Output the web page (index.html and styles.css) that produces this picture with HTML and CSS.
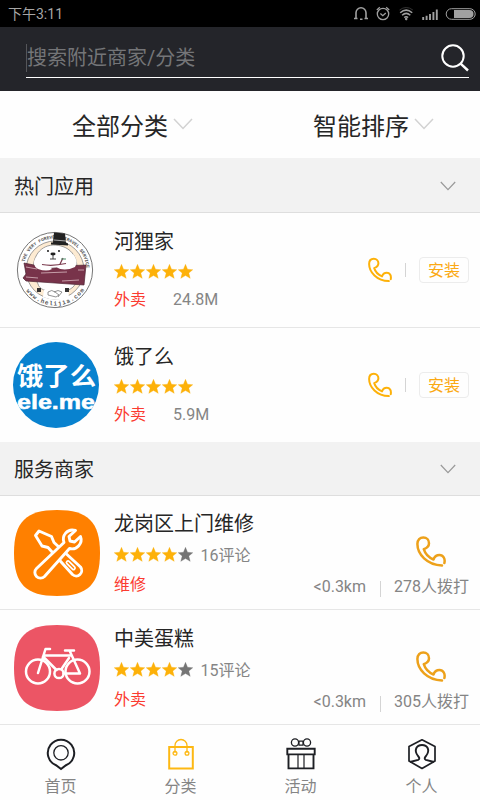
FILE: index.html
```html
<!DOCTYPE html>
<html lang="zh-CN">
<head>
<meta charset="utf-8">
<title>分类</title>
<link rel="stylesheet" href="styles.css">
</head>
<body>
<svg class="defs" width="0" height="0" aria-hidden="true">
  <symbol id="phone" viewBox="0 0 30 31"><path d="M26 29.4C11 29.1 1.4 18 1.4 8C1.4 3.8 4 1.5 7.3 1.5C10.7 1.5 13 4 13 7.2C13 10.5 11 12 7.800 13.2C9.1 17.5 13 21.7 17.5 23.5C18.5 20.5 20.8 19 23.5 19C27.2 19 29.4 22.5 28.4 27" fill="none" stroke="currentColor" stroke-width="2.5" stroke-linecap="round" stroke-linejoin="round"/></symbol>
  <symbol id="star" viewBox="0 0 14 14"><path d="M7 .3L8.9 4.9L13.800 5.3L10.1 8.5L11.4 13.4L7 10.800L2.6 13.4L3.9 8.5L.2 5.3L5.1 4.9Z" fill="currentColor" stroke="currentColor" stroke-width=".3"/></symbol>
  <symbol id="chevron" viewBox="0 0 20 12"><path d="M1 1L10 10.5L19 1" fill="none" stroke="currentColor" stroke-width="1.5"/></symbol>
</svg>

<header class="status">
  <span>下午3:11</span>
  <svg class="status-icons" viewBox="0 0 122 18" fill="none" stroke="#a0a0a0">
    <path d="M2 12.8V7.8a5 5 0 0 1 10 0v5M2 11v3M12 11v3" stroke-width="1.6"/><path d="M0 13.5h3.500M10.500 13.5h3.500M6 14.3h2.5" stroke-width="1.6"/>
    <circle cx="29" cy="9" r="5.7" stroke-width="1.3"/><path d="M26.4 8.5l2.4 2.2 3-2.8M22.8 4.9l3-2.6M35.2 4.9l-3-2.6" stroke-width="1.3"/>
    <path d="M46.2 7.8q6-5.4 12 0M48.1 10.2q4.1-3.6 8.2 0M50.2 12.5q2-1.5 4 0" stroke-width="1.5"/><path d="M45.5 5q6.7-5 13.4 0" stroke="#333"/><circle cx="52.2" cy="14" r=".9" fill="#a0a0a0"/>
    <path d="M69.2 15v-3M72.6 15v-4.3M76 15V9M79.4 15V7M82.8 15V4.5" stroke-width="1.9"/>
    <rect x="92.2" y="3.7" width="29" height="10.6" rx="5.3" stroke-width="1"/><path d="M100 5h15.5a4 4 0 0 1 0 8H100z" fill="#a0a0a0" stroke="none"/>
  </svg>
</header>

<div class="search">
  <div class="search-field">
    <span class="placeholder">搜索附近商家/分类</span>
    <svg class="magnifier" viewBox="0 0 28 28" fill="none" stroke="#fff"><circle cx="12" cy="12" r="10.7" stroke-width="2"/><path d="M19.6 19.6L27 26.5" stroke-width="2.4"/></svg>
  </div>
</div>

<nav class="filters">
  <div class="filter">全部分类<svg class="filter-arrow"><use href="#chevron"/></svg></div>
  <div class="filter">智能排序<svg class="filter-arrow"><use href="#chevron"/></svg></div>
</nav>

<main>
  <h2 class="section">热门应用<svg class="section-arrow"><use href="#chevron"/></svg></h2>

  <article class="item">
    <svg class="logo" viewBox="1 0 86 86">
      <defs><path id="arc-top" d="M11.5 43a31.5 31.5 0 0 1 63 0"/><path id="arc-bottom" d="M7.5 43a35.5 35.5 0 0 0 71 0"/></defs>
      <circle cx="43" cy="43" r="37.6" fill="#fff" stroke="#666" stroke-width=".9"/>
      <circle cx="43" cy="43" r="29" fill="#fdebd2" stroke="#777" stroke-width=".7"/>
      <g font-family="Liberation Mono" font-weight="bold" fill="#555"><text font-size="4.6"><textPath href="#arc-top" startOffset="8">THE VERY FOREVER</textPath></text><text font-size="4.6"><textPath href="#arc-top" startOffset="58">TRAVEL SERVICE</textPath></text><text font-size="6" letter-spacing="1"><textPath href="#arc-bottom" startOffset="22">www.helijia.com</textPath></text></g>
      <path d="M22 48c-3-15 4-29 19-30c15 0 24 9 24 23l-1 14c-2 8-12 10-20 10c-10 0-17-3-18-8z" fill="#fff" stroke="#777" stroke-width=".7"/>
      <path d="M42 5.500l11 1 1 9 2 1v2l-17-1v-2h2z" fill="#222"/><path d="M42 13l12 1" stroke="#aaa"/>
      <circle cx="36" cy="24" r=".9"/><circle cx="47" cy="24" r=".9"/><ellipse cx="41" cy="27" rx="2.6" ry="1.4" fill="#222"/><path d="M41 28v4M38 32h6" stroke="#333" stroke-width=".9"/>
      <path d="M12 36l15 3q9 5 24 0l23-1l-2 20l-29-2-29-2-3-3 3-4z" fill="#78334a" stroke="#4d2534" stroke-width=".7"/>
      <path d="M14 40l11 2M29 46l26-1M14 50l12 1M50 54l17-1M66 43h6" stroke="#d9b9c0" stroke-width=".8"/>
      <path d="M24 30q-5 8 2 12q9 3 14 0l-4-4zM44 40q8 5 19 0q4-6-2-13l-8 8z" fill="#fff"/><path d="M30 37.500q10 2 24-1M51 31l-3 6" fill="none" stroke="#7b3b4e" stroke-width="1.2"/><path d="M49 32h5" stroke="#4b8c69"/>
      <path d="M32 63h24l1 7q-13 5-26 0z" fill="#fff"/><path d="M36 65q4-3 7 0l4 3-3 2-8-2zM42 65q4-3 8 0l-4 5" fill="none" stroke="#666" stroke-width=".7"/><path d="M25 61h4v4h-4zM53 61h4v4h-4z" fill="#333"/>
    </svg>
    <div class="info">
      <h3>河狸家</h3>
      <div class="rating"><svg><use href="#star"/></svg><svg><use href="#star"/></svg><svg><use href="#star"/></svg><svg><use href="#star"/></svg><svg><use href="#star"/></svg></div>
      <div class="meta"><span class="tag">外卖</span><span class="size">24.8M</span></div>
    </div>
    <div class="install-actions"><svg class="call-small"><use href="#phone"/></svg><i class="divider"></i><span class="install">安装</span></div>
  </article>

  <article class="item">
    <svg class="logo" viewBox="0 0 86 86">
      <defs><clipPath id="disc"><circle cx="43" cy="43" r="43"/></clipPath></defs>
      <g clip-path="url(#disc)" fill="#fff"><rect width="86" height="86" fill="#0882cf"/>
      <text x="4" y="42.5" font-family="Noto Sans CJK SC" font-weight="700" font-size="25" textLength="79" lengthAdjust="spacingAndGlyphs">饿了么</text>
      <text x="4" y="66.500" font-family="Liberation Sans" font-weight="bold" font-size="20" stroke="#fff" stroke-width=".5" textLength="78" lengthAdjust="spacingAndGlyphs">ele.me</text></g>
    </svg>
    <div class="info">
      <h3>饿了么</h3>
      <div class="rating"><svg><use href="#star"/></svg><svg><use href="#star"/></svg><svg><use href="#star"/></svg><svg><use href="#star"/></svg><svg><use href="#star"/></svg></div>
      <div class="meta"><span class="tag">外卖</span><span class="size">5.9M</span></div>
    </div>
    <div class="install-actions"><svg class="call-small"><use href="#phone"/></svg><i class="divider"></i><span class="install">安装</span></div>
  </article>

  <h2 class="section">服务商家<svg class="section-arrow"><use href="#chevron"/></svg></h2>

  <article class="item service">
    <svg class="logo" viewBox="0 0 86 86">
      <path d="M43 0C74 0 86 12 86 43S74 86 43 86S0 74 0 43S12 0 43 0Z" fill="#ff8000"/>
      <g fill="#ff8000" stroke="#fff" stroke-width="2.9" stroke-linejoin="round" stroke-linecap="round">
        <path d="M25 21L21.5 25.5L28 36L34 37.5L58.5 64.5A5.5 5.5 0 0 0 66.5 57L40 32.5L37.5 26.5Z"/>
        <path d="M54 52.5L59.5 58" stroke-width="4.8"/><path d="M54 52.5L59.5 58" stroke="#ff8000" stroke-width="1.3"/>
        <path d="M61.5 20.5C53 18 47.5 26 50 32.5L22.5 58.5A5.5 5.5 0 0 0 30.5 66.5L55.5 38.5C63 40.5 69 33 66.5 26.5L60.5 32L56 31L55 26.5Z"/>
      </g>
    </svg>
    <div class="info">
      <h3>龙岗区上门维修</h3>
      <div class="rating"><svg><use href="#star"/></svg><svg><use href="#star"/></svg><svg><use href="#star"/></svg><svg><use href="#star"/></svg><svg class="off"><use href="#star"/></svg><span>16评论</span></div>
      <div class="meta"><span class="tag">维修</span></div>
    </div>
    <div class="call-actions"><svg class="call-large"><use href="#phone"/></svg><div class="calls"><span>&lt;0.3km</span><i class="divider"></i><span>278人拨打</span></div></div>
  </article>

  <article class="item service">
    <svg class="logo" viewBox="0 0 86 86">
      <path d="M43 0C74 0 86 12 86 43S74 86 43 86S0 74 0 43S12 0 43 0Z" fill="#ec5565"/>
      <g fill="none" stroke="#fff" stroke-width="2.5" stroke-linejoin="round" stroke-linecap="round">
        <circle cx="24" cy="46.5" r="12"/><circle cx="63.5" cy="46.5" r="12"/><circle cx="45" cy="48.5" r="4.6"/>
        <path d="M24 48L31.5 24H36M29 31.5L42.5 45M30.5 30.5H57M51 25.5H60M55.5 25.5L66 48.5H49.5M55 33L47.5 44"/>
      </g>
    </svg>
    <div class="info">
      <h3>中美蛋糕</h3>
      <div class="rating"><svg><use href="#star"/></svg><svg><use href="#star"/></svg><svg><use href="#star"/></svg><svg><use href="#star"/></svg><svg class="off"><use href="#star"/></svg><span>15评论</span></div>
      <div class="meta"><span class="tag">外卖</span></div>
    </div>
    <div class="call-actions"><svg class="call-large"><use href="#phone"/></svg><div class="calls"><span>&lt;0.3km</span><i class="divider"></i><span>305人拨打</span></div></div>
  </article>
</main>

<footer class="tabbar">
  <div class="tab"><svg viewBox="0 0 32 34" fill="none" stroke="#1d1f24"><path d="M16 32L11 28.2A13.2 13.2 0 1 1 21 28.2Z" stroke-width="2"/><circle cx="16" cy="15.8" r="7.2" stroke-width="1.3"/></svg><span>首页</span></div>
  <div class="tab"><svg viewBox="0 0 32 34" fill="none" stroke="#fdb813"><path d="M4.2 10H27.8V31.4H4.2Z" stroke-width="2"/><path d="M10 16V8.5a6 6 0 0 1 12 0V16" stroke-width="1.3"/><circle cx="10" cy="16.2" r="1.9" stroke-width="1.3"/><circle cx="22" cy="16.2" r="1.9" stroke-width="1.3"/></svg><span>分类</span></div>
  <div class="tab"><svg viewBox="0 0 32 34" fill="none" stroke="#1d1f24"><path d="M3.5 18V31.4H28.5V18M2.3 11.8H29.7V17.4H2.3Z" stroke-width="1.9"/><path d="M13 18V31M19 18V31M14 4.2h4v4h-4z" stroke-width="1.2"/><circle cx="10" cy="5.5" r="3.6" stroke-width="1.3"/><circle cx="22" cy="5.5" r="3.6" stroke-width="1.3"/></svg><span>活动</span></div>
  <div class="tab"><svg viewBox="0 0 32 34" fill="none" stroke="#1d1f24" stroke-linejoin="round"><path d="M16 2.8L29 9.5V24L16 31.5L3 24V9.5Z" stroke-width="1.7"/><path d="M4 25L12.2 22.8C14 22 13.5 20.5 12 19C7.5 13 10.5 8 16 8S24.500 13 20 19C18.500 20.500 18 22 19.800 22.800L28 25" stroke-width="1.9"/></svg><span>个人</span></div>
</footer>
</body>
</html>
```
FILE: styles.css
```css
* { box-sizing: border-box; }
body {
  margin: 0;
  width: 480px;
  height: 800px;
  overflow: hidden;
  display: flex;
  flex-direction: column;
  background: #fefefe;
  color: #262626;
  font-family: Roboto, "Noto Sans CJK SC", sans-serif;
}
svg { display: block; flex: none; }
.defs { position: absolute; }
h2, h3 { margin: 0; font-weight: 400; }

.status {
  height: 27px;
  padding: 0 4px 0 8px;
  display: flex;
  align-items: center;
  justify-content: space-between;
  background: #000;
  color: #a6a6a6;
  font-size: 14px;
  line-height: 26px;
}
.status-icons { width: 122px; height: 18px; }

.search {
  height: 64px;
  padding: 11px 11px 0 26px;
  background: #24252a;
}
.search-field {
  height: 40px;
  display: flex;
  align-items: center;
  justify-content: space-between;
  border-bottom: 1px solid #fff;
}
.placeholder {
  height: 28px;
  border-left: 1px solid #55565a;
  color: #747578;
  font-size: 20px;
  line-height: 29px;
}
.magnifier { width: 28px; height: 28px; }

.filters {
  height: 67px;
  display: grid;
  grid-template-columns: 1fr 1fr;
}
.filter {
  display: flex;
  align-items: center;
  padding: 5px 0 0 72px;
  font-size: 24px;
  line-height: 36px;
}
.filter + .filter { padding-left: 73px; }
.filter-arrow { width: 20px; height: 12px; margin: -6px 0 0 5px; color: #d2d2d2; }

.section {
  height: 55px;
  padding: 4px 24px 0 14px;
  display: flex;
  align-items: center;
  justify-content: space-between;
  background: #f2f2f2;
  border-bottom: 1px solid #dedede;
  font-size: 20px;
  line-height: 30px;
}
.item + .section { height: 54px; padding-top: 3px; }
.section-arrow { width: 16px; height: 10px; margin-top: -3px; color: #999; }

.item {
  height: 115px;
  padding: 0 11px 0 14px;
  display: grid;
  grid-template-columns: 86px 1fr auto;
  column-gap: 14px;
  border-bottom: 1px solid #e6e6e6;
}
.item:has(+ .section) { height: 114px; border-bottom: 0; }
.section + .service { height: 114px; }
.section + .service + .service { padding-top: 1px; }
.logo { width: 86px; height: 86px; margin-top: 14px; }
.item:not(.service) + .item .logo, .section + .item:not(.service) .logo { margin-left: -1px; }
.info { padding-top: 14px; }
.service .info { padding-top: 13px; }
.info h3 { height: 30px; font-size: 20px; line-height: 30px; }
.rating { height: 28px; display: flex; align-items: center; gap: 1.1px; color: #fdb109; }
.service .rating { height: 30px; }
.rating svg { width: 15px; height: 15px; }
.rating .off { color: #757575; }
.rating span { margin-left: 6px; color: #858585; font-size: 16px; }
.meta { display: flex; gap: 27px; font-size: 16px; line-height: 29px; }
.service .meta { line-height: 31px; }
.tag { color: #fb3b30; }
.size { color: #858585; }

.install-actions { height: 114px; display: flex; align-items: center; }
.call-small { width: 24px; height: 26px; color: #fdb109; }
.divider { width: 1px; height: 14px; background: #d4d4d4; }
.install-actions .divider { margin: 0 13px; }
.install {
  width: 50px;
  height: 26px;
  border: 1px solid #ececec;
  border-radius: 4px;
  color: #fba914;
  font-size: 16px;
  line-height: 26px;
  text-align: center;
}

.call-actions { padding-top: 40px; display: flex; flex-direction: column; align-items: flex-end; }
.call-large { width: 30px; height: 31px; margin-right: 23px; color: #eda11a; }
.calls { display: flex; align-items: center; margin-top: 8px; color: #858585; font-size: 16px; line-height: 24px; }
.calls .divider { margin: 3px 13px 0 14px; height: 16px; }

.tabbar {
  height: 75px;
  display: grid;
  grid-template-columns: repeat(4, 1fr);
}
.tab {
  padding: 12px 0 0 1px;
  display: flex;
  flex-direction: column;
  align-items: center;
  color: #858585;
  font-size: 16px;
  line-height: 24px;
}
.tab:last-child { padding-left: 3px; }
.tab svg { width: 32px; height: 34px; }
.tab span { margin-top: 4px; }
```
